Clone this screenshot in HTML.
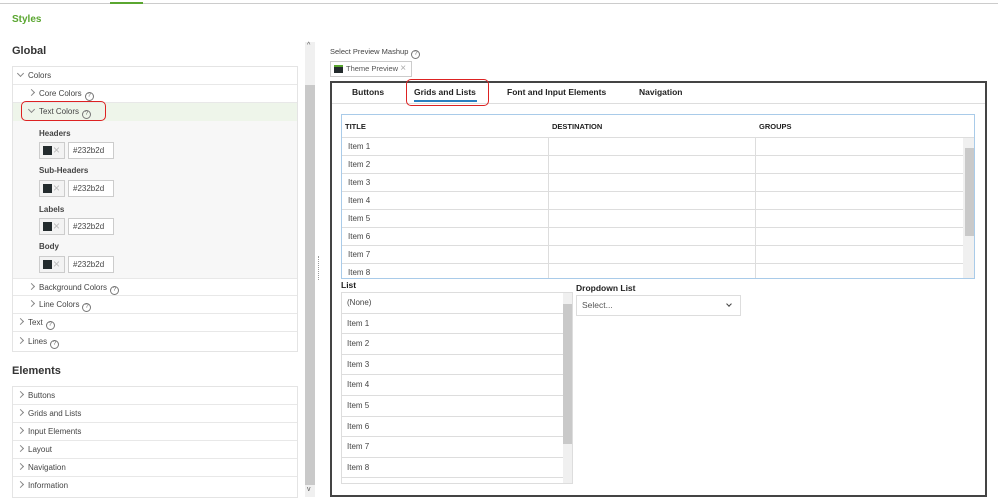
<!DOCTYPE html>
<html><head><style>
*{box-sizing:border-box;margin:0;padding:0}
body{width:998px;height:500px;overflow:hidden;background:#fff;font-family:"Liberation Sans",sans-serif;color:#333;position:relative;font-size:8px}
.a{position:absolute}
.row{position:absolute;left:0;right:0;height:18px;border-bottom:1px solid #e8e8e8;line-height:18px;font-size:8px;color:#444}
.chev{display:inline-block;width:5px;height:5px;border-right:1px solid #888;border-bottom:1px solid #888;transform:rotate(-45deg);margin-right:5px;vertical-align:1px}
.chev.d{transform:rotate(45deg);vertical-align:2px}
.q{display:inline-block;width:9px;height:9px;border:1px solid #777;border-radius:50%;font-size:6px;line-height:7px;text-align:center;margin-left:3px;vertical-align:-1px;color:#666}
.lbl{position:absolute;left:38px;font-size:8px;font-weight:bold;color:#444}
.sw{position:absolute;left:38px;width:26px;height:17px;border:1px solid #ccc;background:#f3f3f3}
.sw:before{content:"";position:absolute;left:3px;top:3px;width:9px;height:9px;background:#232b2d}
.sw:after{content:"×";position:absolute;left:13px;top:0;font-size:12px;line-height:14px;color:#bbb}
.hx{position:absolute;left:67px;width:46px;height:17px;border:1px solid #ccc;background:#fff;font-size:8px;line-height:15px;padding-left:4px;color:#444}
.gr{position:absolute;left:0;width:622px;height:18px;border-bottom:1px solid #ddd;font-size:8px;line-height:18px;color:#444}
.gr span{position:absolute;left:6px}
.lr{position:absolute;left:0;width:221px;height:20.6px;border-bottom:1px solid #ddd;font-size:8px;line-height:20px;color:#444;padding-left:5px}
</style></head><body>
<div class="a" style="left:0;top:3px;width:998px;height:1px;background:#ccc"></div>
<div class="a" style="left:110px;top:2px;width:33px;height:2px;background:#5aa630"></div>
<div class="a" style="left:12px;top:14px;font-size:10px;font-weight:bold;color:#5aa630">Styles</div>
<div class="a" style="left:12px;top:45px;font-size:11px;font-weight:bold;color:#333">Global</div>

<div class="a" style="left:12px;top:66px;width:286px;height:286px;border:1px solid #e4e4e4">
 <div class="row" style="top:0;padding-left:5px"><span class="chev d"></span>Colors</div>
 <div class="row" style="top:18px;padding-left:16px"><span class="chev"></span>Core Colors<span class="q">?</span></div>
 <div class="row" style="top:36px;padding-left:16px;background:#eef5ea;border-bottom:none"><span class="chev d"></span>Text Colors<span class="q">?</span></div>
 <div class="a" style="left:0;right:0;top:54px;height:158px;background:#f7f7f7"></div>
 <div class="lbl" style="left:26px;top:62px">Headers</div>
 <div class="sw" style="left:26px;top:75px"></div><div class="hx" style="left:55px;top:75px">#232b2d</div>
 <div class="lbl" style="left:26px;top:99px">Sub-Headers</div>
 <div class="sw" style="left:26px;top:113px"></div><div class="hx" style="left:55px;top:113px">#232b2d</div>
 <div class="lbl" style="left:26px;top:138px">Labels</div>
 <div class="sw" style="left:26px;top:151px"></div><div class="hx" style="left:55px;top:151px">#232b2d</div>
 <div class="lbl" style="left:26px;top:175px">Body</div>
 <div class="sw" style="left:26px;top:189px"></div><div class="hx" style="left:55px;top:189px">#232b2d</div>
 <div class="row" style="top:211px;padding-left:16px;background:#fff;border-top:1px solid #e8e8e8"><span class="chev"></span>Background Colors<span class="q">?</span></div>
 <div class="row" style="top:229px;padding-left:16px"><span class="chev"></span>Line Colors<span class="q">?</span></div>
 <div class="row" style="top:247px;padding-left:5px"><span class="chev"></span>Text<span class="q">?</span></div>
 <div class="row" style="top:266px;padding-left:5px;border-bottom:none"><span class="chev"></span>Lines<span class="q">?</span></div>
</div>
<div class="a" style="left:21px;top:101px;width:85px;height:20px;border:1px solid #d22;border-radius:5px"></div>

<div class="a" style="left:12px;top:365px;font-size:11px;font-weight:bold;color:#333">Elements</div>
<div class="a" style="left:12px;top:386px;width:286px;height:112px;border:1px solid #e4e4e4">
 <div class="row" style="top:0;padding-left:5px"><span class="chev"></span>Buttons</div>
 <div class="row" style="top:18px;padding-left:5px"><span class="chev"></span>Grids and Lists</div>
 <div class="row" style="top:36px;padding-left:5px"><span class="chev"></span>Input Elements</div>
 <div class="row" style="top:54px;padding-left:5px"><span class="chev"></span>Layout</div>
 <div class="row" style="top:72px;padding-left:5px"><span class="chev"></span>Navigation</div>
 <div class="row" style="top:90px;padding-left:5px;border-bottom:none"><span class="chev"></span>Information</div>
</div>

<div class="a" style="left:305px;top:42px;width:10px;height:455px;background:#f0f0f0"></div>
<div class="a" style="left:305px;top:85px;width:10px;height:400px;background:#c9c9c9"></div>
<div class="a" style="left:307px;top:42px;font-size:7px;color:#555">^</div>
<div class="a" style="left:307px;top:486px;font-size:7px;color:#555">v</div>
<div class="a" style="left:318px;top:256px;width:1px;height:24px;border-left:1px dotted #999"></div>

<div class="a" style="left:330px;top:47px;font-size:7.5px;color:#444">Select Preview Mashup<span class="q">?</span></div>
<div class="a" style="left:330px;top:61px;width:82px;height:16px;border:1px solid #ccc;font-size:7.5px;line-height:14px;color:#555;padding-left:15px">Theme Preview <span style="color:#aaa;font-size:10px">×</span>
 <div class="a" style="left:3px;top:3px;width:9px;height:8px;background:#232b2d;border-top:2px solid #5aa630"></div></div>

<div class="a" style="left:330px;top:81px;width:657px;height:416px;border:2px solid #444"></div>
<div class="a" style="left:332px;top:103px;width:653px;height:1px;background:#ddd"></div>
<div class="a" style="left:352px;top:87px;font-size:8.5px;font-weight:bold;color:#222">Buttons</div>
<div class="a" style="left:414px;top:87px;font-size:8.5px;font-weight:bold;color:#222">Grids and Lists</div>
<div class="a" style="left:414px;top:100px;width:63px;height:2px;background:#2a7fc0"></div>
<div class="a" style="left:507px;top:87px;font-size:8.5px;font-weight:bold;color:#222">Font and Input Elements</div>
<div class="a" style="left:639px;top:87px;font-size:8.5px;font-weight:bold;color:#222">Navigation</div>
<div class="a" style="left:406px;top:79px;width:83px;height:27px;border:1px solid #d22;border-radius:5px"></div>

<div class="a" style="left:341px;top:114px;width:634px;height:165px;border:1px solid #a9cbe9">
 <div class="a" style="left:3px;top:7px;font-size:7.5px;font-weight:bold;color:#222">TITLE</div>
 <div class="a" style="left:210px;top:7px;font-size:7.5px;font-weight:bold;color:#222">DESTINATION</div>
 <div class="a" style="left:417px;top:7px;font-size:7.5px;font-weight:bold;color:#222">GROUPS</div>
 <div class="a" style="left:0;top:22px;width:632px;height:1px;background:#ddd"></div>
 <div class="gr" style="top:23px"><span>Item 1</span></div>
 <div class="gr" style="top:41px"><span>Item 2</span></div>
 <div class="gr" style="top:59px"><span>Item 3</span></div>
 <div class="gr" style="top:77px"><span>Item 4</span></div>
 <div class="gr" style="top:95px"><span>Item 5</span></div>
 <div class="gr" style="top:113px"><span>Item 6</span></div>
 <div class="gr" style="top:131px"><span>Item 7</span></div>
 <div class="gr" style="top:149px;border-bottom:none"><span>Item 8</span></div>
 <div class="a" style="left:206px;top:23px;width:1px;height:140px;background:#ddd"></div>
 <div class="a" style="left:413px;top:23px;width:1px;height:140px;background:#ddd"></div>
 <div class="a" style="left:621px;top:23px;width:11px;height:140px;background:#f0f0f0"></div>
 <div class="a" style="left:623px;top:33px;width:9px;height:88px;background:#c9c9c9"></div>
</div>

<div class="a" style="left:341px;top:280px;font-size:8.5px;font-weight:bold;color:#222">List</div>
<div class="a" style="left:341px;top:292px;width:232px;height:192px;border:1px solid #ddd;overflow:hidden">
 <div class="lr" style="top:0">(None)</div>
 <div class="lr" style="top:20.6px">Item 1</div>
 <div class="lr" style="top:41.2px">Item 2</div>
 <div class="lr" style="top:61.8px">Item 3</div>
 <div class="lr" style="top:82.4px">Item 4</div>
 <div class="lr" style="top:103px">Item 5</div>
 <div class="lr" style="top:123.6px">Item 6</div>
 <div class="lr" style="top:144.2px">Item 7</div>
 <div class="lr" style="top:164.8px">Item 8</div>
 <div class="a" style="left:221px;top:0;width:10px;height:190px;background:#f0f0f0"></div>
 <div class="a" style="left:221px;top:11px;width:10px;height:140px;background:#c9c9c9"></div>
</div>
<div class="a" style="left:576px;top:283px;font-size:8.5px;font-weight:bold;color:#222">Dropdown List</div>
<div class="a" style="left:576px;top:295px;width:165px;height:21px;border:1px solid #ddd;font-size:8.5px;line-height:19px;padding-left:5px;color:#555">Select...
 <span class="a" style="right:9px;top:6px;width:4px;height:4px;border-right:1px solid #444;border-bottom:1px solid #444;transform:rotate(45deg)"></span></div>
</body></html>
